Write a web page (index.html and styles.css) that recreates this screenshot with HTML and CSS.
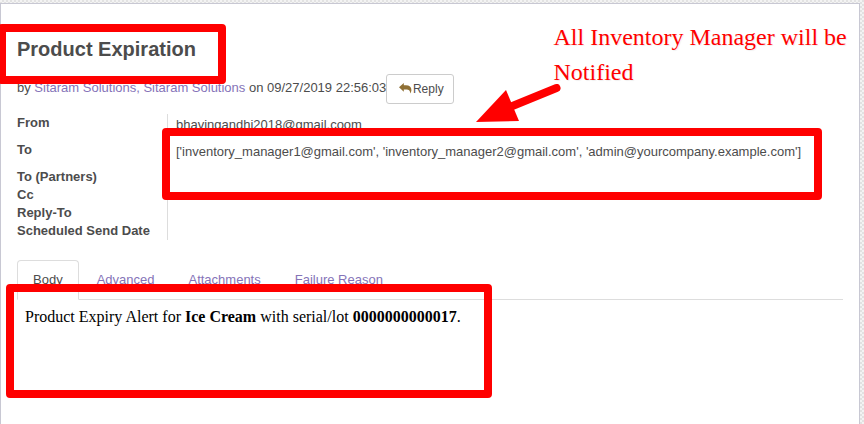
FILE: index.html
```html
<!DOCTYPE html>
<html lang="en">
<head>
<meta charset="utf-8">
<title>Product Expiration</title>
<link rel="stylesheet" href="styles.css">
</head>
<body>
<main class="sheet">
  <h1>Product Expiration</h1>
  <div class="meta">
    <span>by <a>Sitaram Solutions, Sitaram Solutions</a> on 09/27/2019 22:56:03</span>
    <button class="reply"><svg class="reply-icon" viewBox="0 0 13 11"><path d="M0 4.200 4.800 0v2.200h2C10.500 2.200 12.400 4 12.400 7c0 1.400-.6 2.500-1.400 3.600.4-3-.8-4.200-4.200-4.200h-2v2.300z"/></svg>Reply</button>
  </div>
  <div class="details">
    <div class="labels">
      <div class="tall">From</div>
      <div class="tall">To</div>
      <div>To (Partners)</div>
      <div>Cc</div>
      <div>Reply-To</div>
      <div>Scheduled Send Date</div>
    </div>
    <div class="values">
      <div>bhavingandhi2018@gmail.coom</div>
      <div>['inventory_manager1@gmail.com', 'inventory_manager2@gmail.com', 'admin@yourcompany.example.com']</div>
    </div>
  </div>
  <nav class="tabs">
    <a class="tab active">Body</a>
    <a class="tab">Advanced</a>
    <a class="tab">Attachments</a>
    <a class="tab">Failure Reason</a>
  </nav>
  <p class="message">Product Expiry Alert for <b>Ice Cream</b> with serial/lot <b>0000000000017</b>.</p>
</main>
<div class="mark mark-title"></div>
<div class="mark mark-recipients"></div>
<div class="mark mark-body"></div>
<svg class="arrow" viewBox="0 0 90 42"><path class="head" d="M0 38 30 6l13 31z"/><path class="shaft" d="M34 23 80.500 4"/></svg>
<div class="note">All Inventory Manager will be<br>Notified</div>
</body>
</html>
```

FILE: styles.css
```css
* { box-sizing: border-box; }
body {
  margin: 0;
  height: 424px;
  padding: 3px 4px 0 0;
  overflow: hidden;
  position: relative;
  background: repeating-conic-gradient(#e2e2e2 0 25%, #f3f3f3 0 50%) 0 0 / 4px 4px;
  color: #4c4c4c;
  font: 13px/18px "Liberation Sans", Arial, sans-serif;
}
a { color: #8573b8; }
.sheet {
  height: 440px;
  padding: 33px 16px 0;
  border: 1px solid #c8c8d3;
  background: #fff;
}
h1 {
  margin: 0;
  font-size: 20px;
  line-height: 24px;
}
.meta {
  display: flex;
  margin-top: 13px;
  height: 30px;
}
.meta span { padding-top: 5px; }
.reply {
  display: flex;
  align-items: center;
  justify-content: center;
  width: 68px;
  height: 30px;
  padding: 0 0 0 2px;
  border: 1px solid #ccc;
  border-radius: 3px;
  background: #fff;
  color: #4c4c4c;
  font: 12px "Liberation Sans", Arial, sans-serif;
}
.reply-icon {
  width: 13px;
  height: 11px;
  margin: -2px 1px 0 0;
  fill: #8f7034;
}
.details {
  display: flex;
  margin-top: 10px;
  height: 126px;
}
.labels {
  width: 151px;
  border-right: 1px solid #ddd;
  font-weight: bold;
}
.labels .tall { height: 27px; }
.values { padding: 2px 0 0 8px; white-space: nowrap; }
.values div { height: 27px; }
.tabs {
  display: flex;
  gap: 2px;
  height: 40px;
  margin-top: 20px;
  border-bottom: 1px solid #ddd;
}
.tab {
  height: 40px;
  padding: 10px 15px;
  border: 1px solid transparent;
}
.active {
  border-color: #ddd #ddd #fff;
  border-radius: 4px 4px 0 0;
  background: #fff;
  color: #4c4c4c;
}
.message {
  margin: 8px 0 0 8px;
  color: #000;
  font: 16px/18px "Liberation Serif", "Times New Roman", serif;
}
.mark {
  position: absolute;
  border: 8px solid #f00;
  border-radius: 4px;
}
.mark-title { left: -2px; top: 24px; width: 228px; height: 60px; }
.mark-recipients { left: 162px; top: 128px; width: 660px; height: 72px; }
.mark-body { left: 6px; top: 284px; width: 486px; height: 114px; }
.arrow {
  position: absolute;
  left: 476px;
  top: 84px;
  width: 90px;
  height: 42px;
}
.head { fill: #f00; }
.shaft { stroke: #f00; stroke-width: 8px; stroke-linecap: round; }
.note {
  position: absolute;
  left: 553.5px;
  top: 20px;
  color: #f00;
  font: 24px/35px "Liberation Serif", "Times New Roman", serif;
  text-shadow: 1px 1px 1px #0001;
  white-space: nowrap;
}
```
